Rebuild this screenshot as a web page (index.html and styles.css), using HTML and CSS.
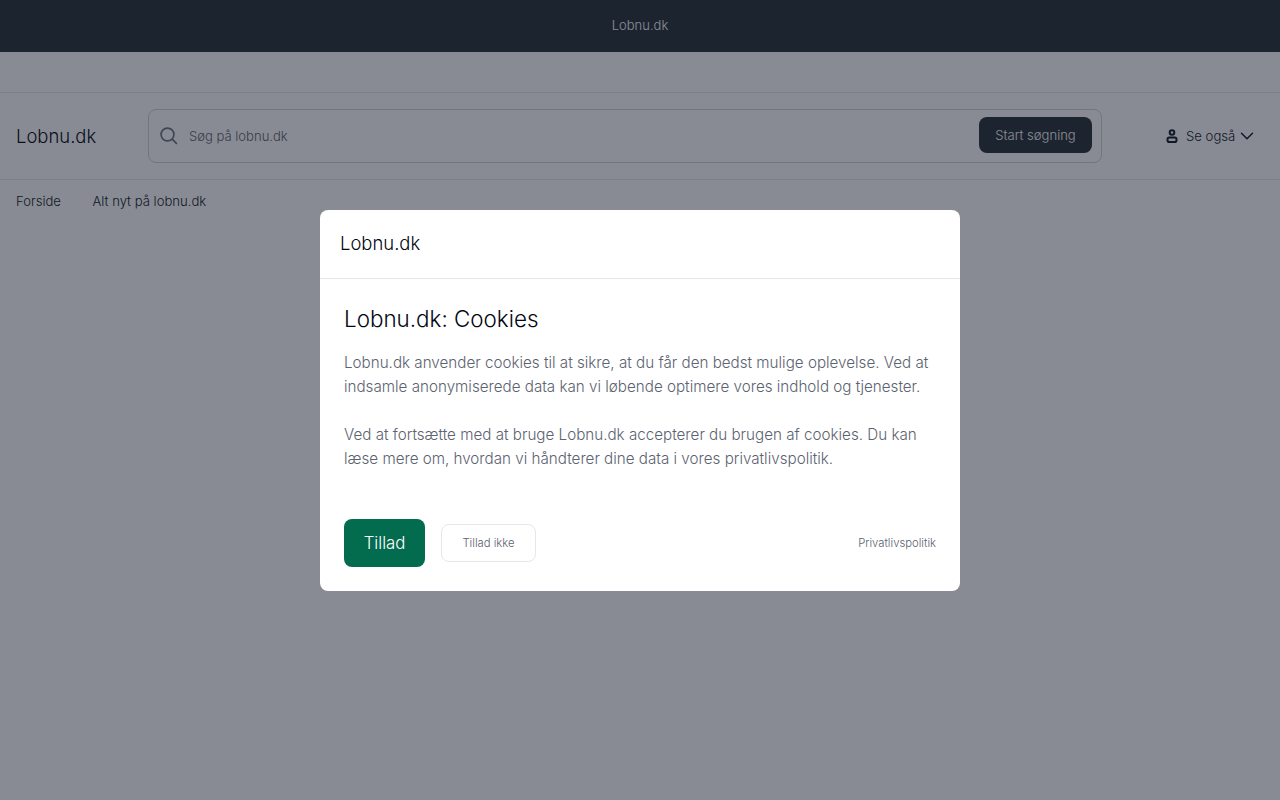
FILE: index.html
```html
<!DOCTYPE html>
<html lang="da">
<head>
<meta charset="utf-8">
<title>Lobnu.dk</title>
<link rel="stylesheet" href="styles.css">
</head>
<body>
<div class="topbar">Lobnu.dk</div>
<div class="spacer"></div>
<header class="header">
  <div class="logo">Lobnu.dk</div>
  <form class="search">
    <svg class="search-icon" width="20" height="20" viewBox="0 0 20 20" fill="none" stroke="currentColor" stroke-width="1.7" stroke-linecap="round"><circle cx="8.5" cy="8.5" r="6.4"/><path d="M13.2 13.2 17.4 17.4"/></svg>
    <span class="placeholder">Søg på lobnu.dk</span>
    <span class="search-btn">Start søgning</span>
  </form>
  <div class="see-also">
    <svg class="user-icon" width="12" height="14" viewBox="0 0 12 14" fill="none" stroke="currentColor" stroke-width="2"><circle cx="6" cy="3.5" r="2.3"/><rect x="1.5" y="8.5" width="9" height="4.5" rx="1.8"/></svg>
    <span class="see-label">Se også</span>
    <svg width="14" height="8" viewBox="0 0 14 8" fill="none" stroke="currentColor" stroke-width="1.5" stroke-linecap="round" stroke-linejoin="round"><path d="M1.5 1.2 7 6.7l5.5-5.5"/></svg>
  </div>
</header>
<nav class="nav"><a>Forside</a><a>Alt nyt på lobnu.dk</a></nav>
<div class="overlay">
  <div class="modal">
    <div class="modal-head">Lobnu.dk</div>
    <div class="modal-body">
      <h2 class="title">Lobnu.dk: Cookies</h2>
      <p class="text">Lobnu.dk anvender cookies til at sikre, at du får den bedst mulige oplevelse. Ved at indsamle anonymiserede data kan vi løbende optimere vores indhold og tjenester.<br><br>Ved at fortsætte med at bruge Lobnu.dk accepterer du brugen af cookies. Du kan læse mere om, hvordan vi håndterer dine data i vores privatlivspolitik.</p>
      <div class="actions">
        <button class="allow">Tillad</button>
        <button class="deny">Tillad ikke</button>
        <a class="policy">Privatlivspolitik</a>
      </div>
    </div>
  </div>
</div>
</body>
</html>
```
FILE: styles.css
```css
* { box-sizing: border-box; }
html, body { margin: 0; height: 100%; }
body { font-family: Inter, "Liberation Sans", sans-serif; font-weight: 350; background: #fff; color: #111827; overflow: hidden; }
.topbar { height: 52px; background: #273037; color: #fff; display: flex; align-items: center; justify-content: center; font-size: 13px; padding-bottom: 2px; }
.spacer { height: 41px; border-bottom: 1px solid #e5e7eb; }
.header { height: 87px; border-bottom: 1px solid #e5e7eb; display: flex; align-items: center; padding: 0 16px; }
.logo { width: 132px; font-size: 18.45px; color: #030712; }
.search { width: 954px; height: 54px; border: 1px solid #d1d5db; border-radius: 8px; display: flex; align-items: center; padding: 0 9px 0 10px; }
.search-icon { color: #6b7280; flex: none; }
.placeholder { flex: 1; margin-left: 10px; font-size: 13.05px; color: #5b6270; }
.search-btn { width: 113px; height: 36px; margin-bottom: 2px; padding-bottom: 1px; background: #273037; color: #fff; border-radius: 8px; font-size: 13.05px; display: flex; align-items: center; justify-content: center; }
.see-also { margin-left: 64px; display: flex; align-items: center; font-size: 13.15px; color: #111827; }
.see-label { margin: 0 5px 0 8px; }
.nav { display: flex; gap: 31.5px; padding: 12px 16px 13px; font-size: 13.1px; line-height: 18px; color: #111827; }
.overlay { position: fixed; inset: 0; background: rgba(17, 24, 39, 0.5); }
.modal { position: absolute; left: 320px; top: 210px; width: 640px; height: 381px; background: #fff; border-radius: 8px; }
.modal-head { height: 69px; padding: 0 20px 2px; border-bottom: 1px solid #e5e7eb; display: flex; align-items: center; font-size: 18.45px; color: #030712; }
.modal-body { padding: 24px; }
.title { margin: 0; font-size: 22.4px; line-height: 32px; font-weight: 350; color: #030712; }
.text { margin: 16px 0 0; font-size: 15.2px; line-height: 24px; color: #5b6270; }
.actions { margin-top: 48px; display: flex; align-items: center; gap: 16px; }
.allow { width: 81px; height: 48px; border: 0; border-radius: 8px; background: #046c4e; color: #fff; font: 350 16.8px Inter, sans-serif; }
.deny { width: 95px; height: 38px; border: 1px solid #e5e7eb; border-radius: 8px; background: #fff; color: #5b6270; font: 350 11.3px Inter, sans-serif; }
.policy { font-size: 11.3px; color: #5b6270; margin-left: auto; }
```
